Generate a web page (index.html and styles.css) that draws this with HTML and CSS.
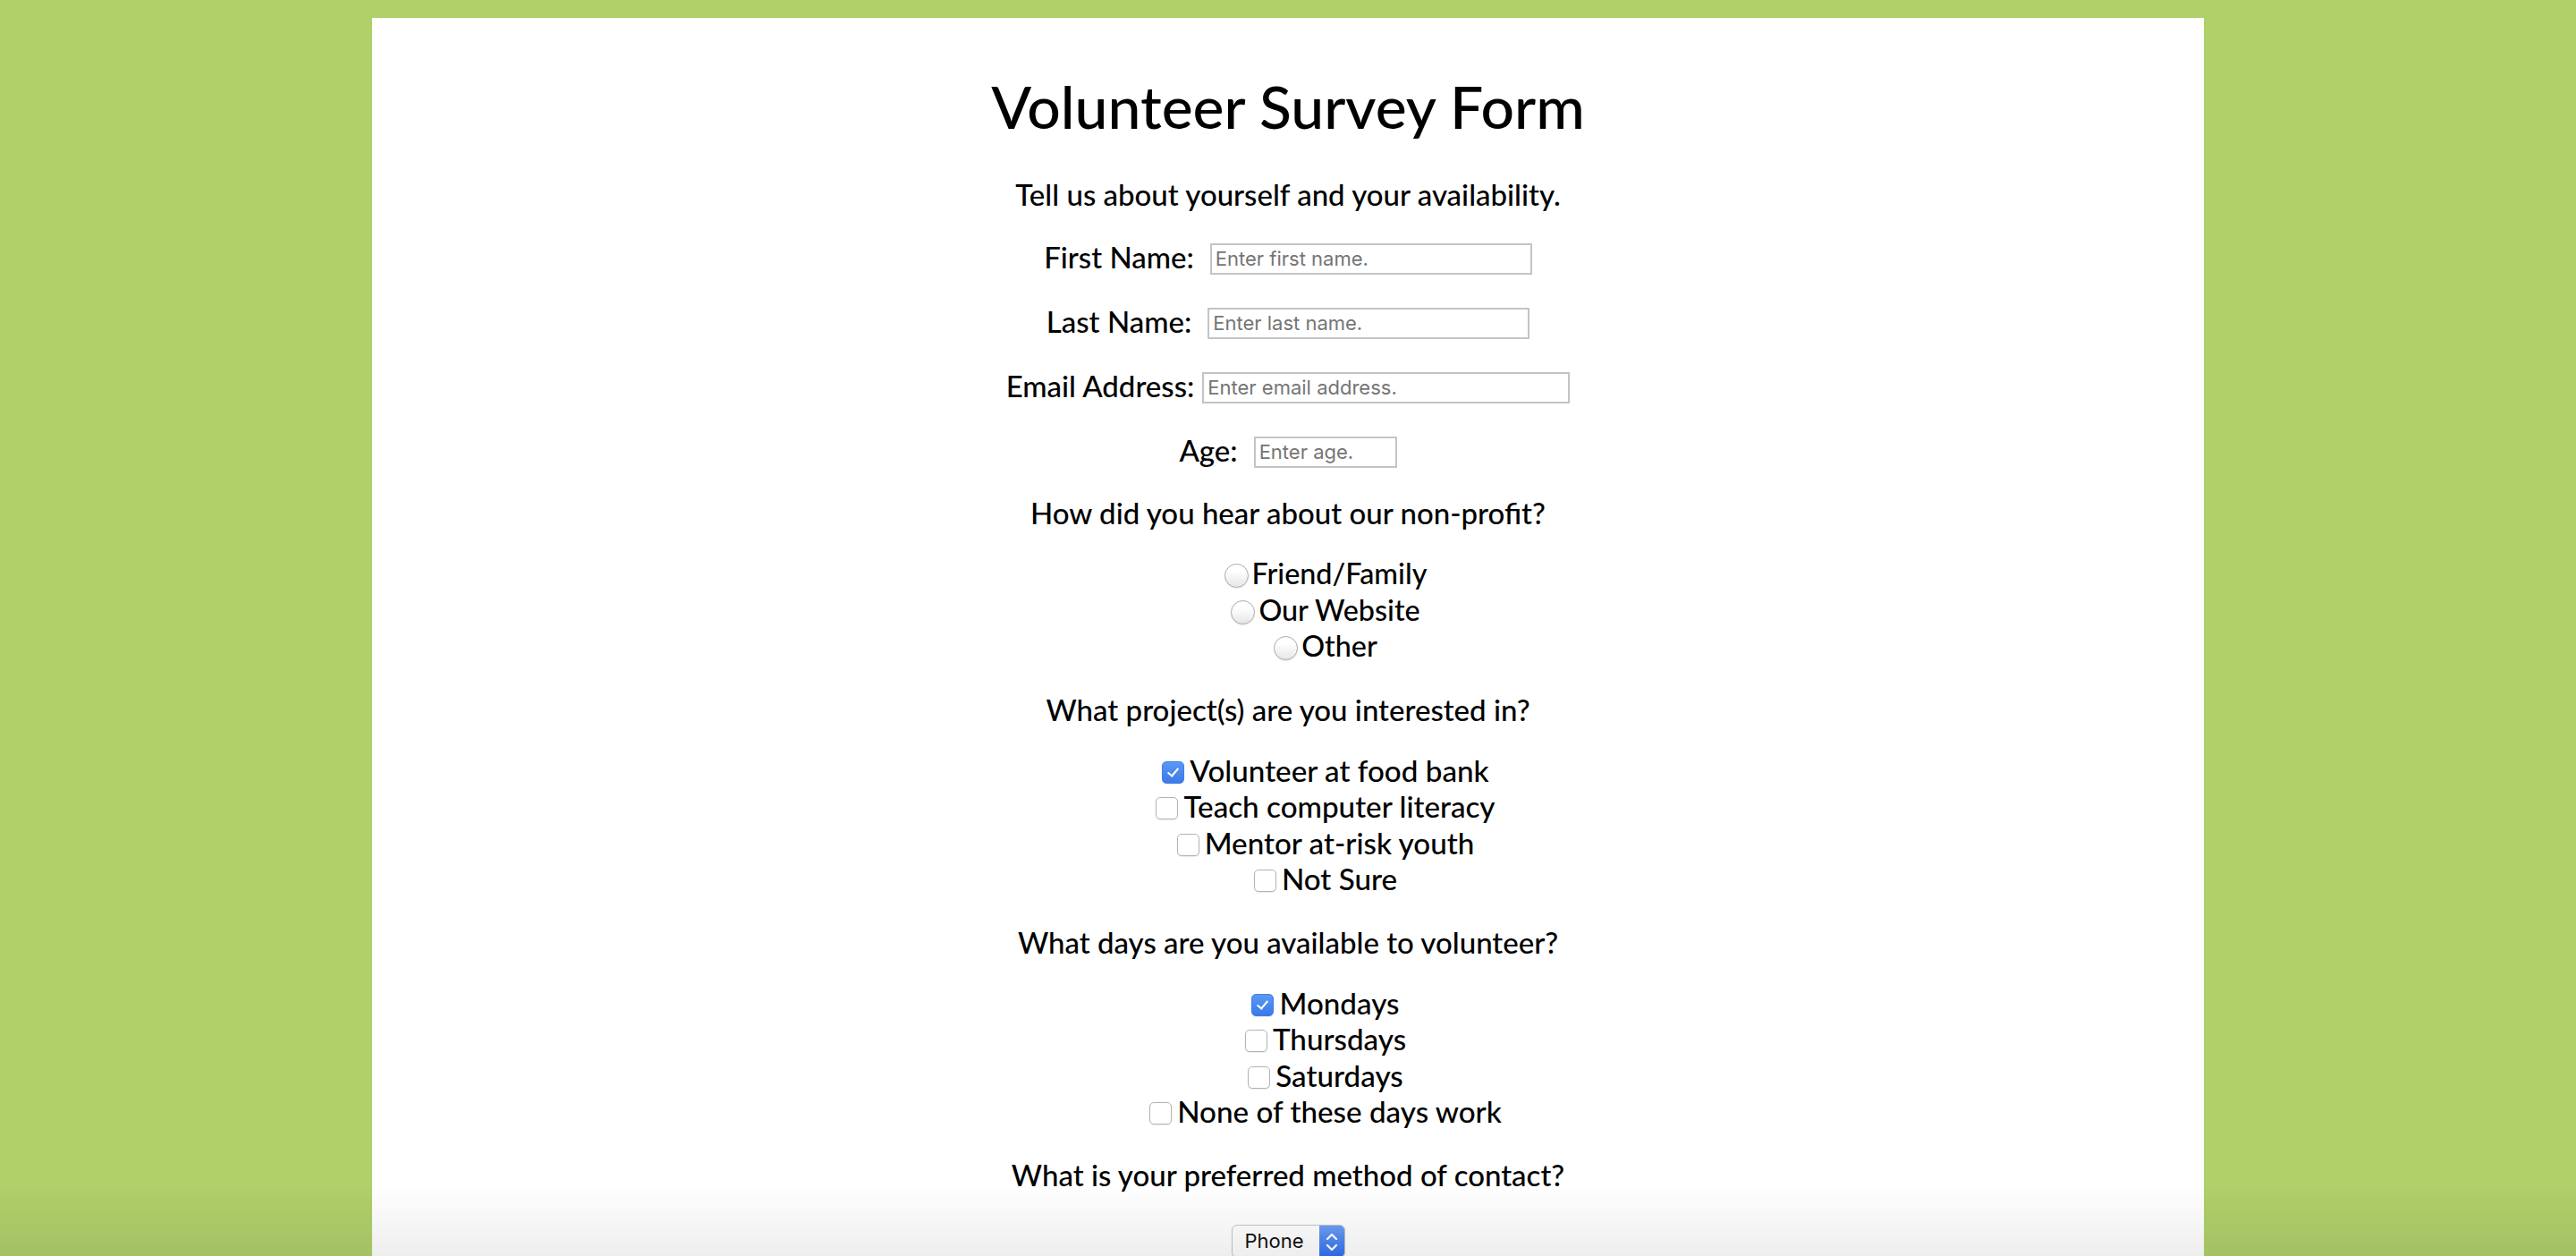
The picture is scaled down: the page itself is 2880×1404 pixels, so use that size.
FILE: index.html
```html
<!DOCTYPE html>
<html lang="en">
<head>
<meta charset="utf-8">
<title>Volunteer Survey Form</title>
<link rel="stylesheet" href="styles.css">
</head>
<body>
<main class="card">
  <h1 class="title">Volunteer Survey Form</h1>
  <p class="lead">Tell us about yourself and your availability.</p>
  <form class="form">
    <div class="field">
      <label class="field-label" for="first">First Name:</label>
      <input class="text-input w-name" id="first" type="text" placeholder="Enter first name.">
    </div>
    <div class="field">
      <label class="field-label" for="last">Last Name:</label>
      <input class="text-input w-name" id="last" type="text" placeholder="Enter last name.">
    </div>
    <div class="field field-tight">
      <label class="field-label" for="email">Email Address:</label>
      <input class="text-input w-email" id="email" type="email" placeholder="Enter email address.">
    </div>
    <div class="field">
      <label class="field-label" for="age">Age:</label>
      <input class="text-input w-age" id="age" type="number" placeholder="Enter age.">
    </div>

    <p class="question">How did you hear about our non-profit?</p>
    <div class="options">
      <label class="option option-radio"><input class="radio" type="radio" name="hear">Friend/Family</label>
      <label class="option option-radio"><input class="radio" type="radio" name="hear">Our Website</label>
      <label class="option option-radio"><input class="radio" type="radio" name="hear">Other</label>
    </div>

    <p class="question">What project(s) are you interested in?</p>
    <div class="options">
      <label class="option option-check"><input class="check" type="checkbox" checked>Volunteer at food bank</label>
      <label class="option option-check"><input class="check" type="checkbox">Teach computer literacy</label>
      <label class="option option-check"><input class="check" type="checkbox">Mentor at-risk youth</label>
      <label class="option option-check"><input class="check" type="checkbox">Not Sure</label>
    </div>

    <p class="question">What days are you available to volunteer?</p>
    <div class="options">
      <label class="option option-check"><input class="check" type="checkbox" checked>Mondays</label>
      <label class="option option-check"><input class="check" type="checkbox">Thursdays</label>
      <label class="option option-check"><input class="check" type="checkbox">Saturdays</label>
      <label class="option option-check"><input class="check" type="checkbox">None of these days work</label>
    </div>

    <p class="question">What is your preferred method of contact?</p>
    <div class="select-row">
      <div class="select">
        <span class="select-value">Phone</span>
        <span class="select-arrows">
          <svg width="28" height="37" viewBox="0 0 28 37" aria-hidden="true">
            <polyline points="9,15 14,10 19,15" fill="none" stroke="#fff" stroke-width="2.4" stroke-linecap="round" stroke-linejoin="round"/>
            <polyline points="9,22 14,27 19,22" fill="none" stroke="#fff" stroke-width="2.4" stroke-linecap="round" stroke-linejoin="round"/>
          </svg>
        </span>
      </div>
    </div>
  </form>
</main>
<div class="bottom-shade"></div>
</body>
</html>
```

FILE: styles.css
```css
html, body {
  margin: 0;
  padding: 0;
}

body {
  background: #b0d06a;
  font-family: Lato, "Open Sans", "Noto Sans", sans-serif;
  color: #000;
}

.card {
  display: flow-root;
  width: 2048px;
  min-height: 1500px;
  margin: 20px auto 0;
  background: #fff;
  text-align: center;
}

.title {
  margin: 59px 0 0;
  font-size: 66px;
  font-weight: 500;
  line-height: 80px;
}

.lead {
  margin: 38px 0 0;
  font-size: 33px;
  font-weight: 500;
  line-height: 40px;
}

.form {
  margin: 30px 0 0;
}

.field {
  display: flex;
  justify-content: center;
  align-items: center;
  gap: 18px;
  height: 40px;
}

.field + .field {
  margin-top: 32px;
}

.field-tight {
  gap: 9px;
}

.field-label {
  font-size: 33px;
  font-weight: 500;
  line-height: 40px;
}

.text-input {
  box-sizing: border-box;
  height: 35px;
  margin: 4px 0 0;
  padding: 0 4px;
  border: 2px solid #c4c4c4;
  border-radius: 0;
  background: #fff;
  font-family: Inter, "Liberation Sans", sans-serif;
  font-size: 22px;
  color: #333;
  outline: none;
}

.text-input::placeholder {
  color: #757575;
}

.text-input[type="number"] {
  -moz-appearance: textfield;
}

.text-input::-webkit-outer-spin-button,
.text-input::-webkit-inner-spin-button {
  -webkit-appearance: none;
  margin: 0;
}

.w-name { width: 360px; }
.w-email { width: 411px; }
.w-age { width: 160px; }

.question {
  margin: 30px 0 0;
  font-size: 33px;
  font-weight: 500;
  line-height: 40px;
}

.options {
  margin-top: 28px;
  padding-left: 84px;
}

.option {
  display: block;
  line-height: 40.5px;
  font-weight: 500;
}

.option-radio {
  font-size: 32.3px;
}

.option-check {
  font-size: 33.2px;
}

.radio {
  -webkit-appearance: none;
  appearance: none;
  box-sizing: border-box;
  width: 27px;
  height: 27px;
  margin: 0 4px 0 0;
  border: 1.5px solid #a9a9a9;
  border-radius: 50%;
  background: linear-gradient(#ffffff 30%, #e6e6e6);
  box-shadow: inset 0 1px 1px rgba(255, 255, 255, 0.9), 0 1px 1px rgba(0, 0, 0, 0.1);
  vertical-align: -4px;
}

.check {
  -webkit-appearance: none;
  appearance: none;
  position: relative;
  box-sizing: border-box;
  width: 25px;
  height: 25px;
  margin: 0 6px 0 0;
  border: 1.5px solid #b3b3b3;
  border-radius: 5px;
  background: #fff;
  box-shadow: 0 1px 1px rgba(0, 0, 0, 0.08);
  vertical-align: -2px;
}

.check:checked {
  border-color: #3f7fe8;
  background: linear-gradient(#5b98f4, #3a79e8);
}

.check:checked::after {
  content: "";
  position: absolute;
  left: 8px;
  top: 4px;
  width: 5px;
  height: 10px;
  border: solid #fff;
  border-width: 0 2.5px 2.5px 0;
  transform: rotate(40deg);
}

.select-row {
  display: flex;
  justify-content: center;
  margin-top: 36px;
}

.select {
  display: flex;
  box-sizing: border-box;
  width: 127px;
  height: 37px;
  border: 1px solid #c6c6c6;
  border-radius: 6px;
  background: #fff;
  overflow: hidden;
  box-shadow: 0 1px 1px rgba(0, 0, 0, 0.06);
}

.select-value {
  flex: 1;
  padding-left: 14px;
  font-family: Inter, "Liberation Sans", sans-serif;
  font-size: 22px;
  line-height: 35px;
  text-align: left;
  color: #111;
}

.select-arrows {
  display: flex;
  width: 28px;
  background: linear-gradient(#6d9ff3, #2f6ff0);
}

.bottom-shade {
  position: fixed;
  left: 0;
  right: 0;
  bottom: 0;
  height: 80px;
  background: linear-gradient(rgba(0, 0, 0, 0), rgba(0, 0, 0, 0.065));
  pointer-events: none;
}
```
